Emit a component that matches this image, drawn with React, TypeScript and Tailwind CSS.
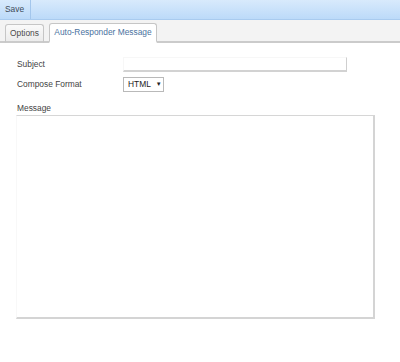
export default function App() {
  return (
    <div className="h-[362px] w-[400px] bg-white font-['Liberation_Sans',Arial,sans-serif] text-[8.4px] text-[#444]">
      {/* toolbar */}
      <div className="flex h-[20px] border-b border-[#a9cbef] bg-gradient-to-b from-[#d8eafc] to-[#bcdaf9]">
        <button className="h-full w-[31px] border-r border-[#a3c6ec] pl-[5px] text-left text-[8.4px] text-[#3d4a57]">
          Save
        </button>
      </div>

      {/* tabs */}
      <div className="flex h-[23px] items-end gap-[5px] border-b-2 border-[#cbcbcb] bg-[#f3f3f3] pl-[5px]">
        <div className="-mb-[2px] flex h-[19px] w-[39px] items-center justify-center rounded-t-[3px] border border-b-2 border-[#c6c6c6] border-b-[#cbcbcb] bg-gradient-to-b from-[#fafafa] to-[#ececec] text-[#4a4a4a]">
          Options
        </div>
        <div className="-mb-[2px] flex h-[20px] w-[108px] items-center justify-center rounded-t-[3px] border border-b-2 border-[#c6c6c6] border-b-white bg-white text-[#4a72a0]">
          Auto-Responder Message
        </div>
      </div>

      {/* form */}
      <div className="pl-[17px] pr-[25px]">
        <div className="mt-[14px] flex h-[15px] items-center">
          <span className="w-[106px]">Subject</span>
          <div className="h-[15px] w-[224px] border border-t-[#f7f7f7] border-l-[#f7f7f7] border-r-[#cfcfcf] border-b-2 border-b-[#d2d2d2] bg-white" />
        </div>
        <div className="mt-[5px] flex h-[15px] items-center">
          <span className="w-[106px]">Compose Format</span>
          <div className="flex h-[15px] w-[41px] items-center border border-[#b9b9b9] bg-white pl-[4px] text-[#222]">
            <span>HTML</span>
            <span className="ml-[5px] text-[6px]">▼</span>
          </div>
        </div>
        <div className="mt-[9px] h-[14px] leading-[14px]">Message</div>
        <div className="-ml-[1px] h-[204px] w-[359px] border border-t-[#d6d6d6] border-l-[#f8f8f8] border-r-2 border-b-2 border-r-[#d4d4d4] border-b-[#d4d4d4] bg-white" />
      </div>
    </div>
  );
}
